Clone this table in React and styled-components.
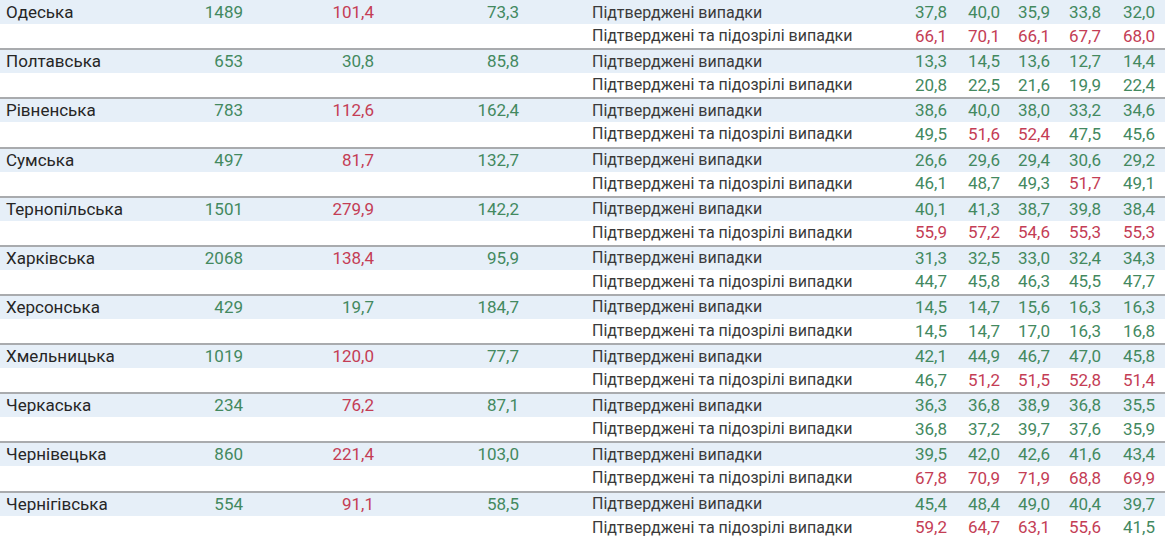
import React from "react";
import styled, { createGlobalStyle } from "styled-components";

const GlobalStyle = createGlobalStyle`
  html, body { margin: 0; padding: 0; background: #ffffff; }
  body { font-family: Roboto, "Liberation Sans", sans-serif; overflow: hidden; }
`;

const GREEN = "#43895f";
const RED = "#c43d55";

const data = [
  ["Одеська", "1489", "101,4", "73,3", ["37,8", "40,0", "35,9", "33,8", "32,0"], ["66,1", "70,1", "66,1", "67,7", "68,0"]],
  ["Полтавська", "653", "30,8", "85,8", ["13,3", "14,5", "13,6", "12,7", "14,4"], ["20,8", "22,5", "21,6", "19,9", "22,4"]],
  ["Рівненська", "783", "112,6", "162,4", ["38,6", "40,0", "38,0", "33,2", "34,6"], ["49,5", "51,6", "52,4", "47,5", "45,6"]],
  ["Сумська", "497", "81,7", "132,7", ["26,6", "29,6", "29,4", "30,6", "29,2"], ["46,1", "48,7", "49,3", "51,7", "49,1"]],
  ["Тернопільська", "1501", "279,9", "142,2", ["40,1", "41,3", "38,7", "39,8", "38,4"], ["55,9", "57,2", "54,6", "55,3", "55,3"]],
  ["Харківська", "2068", "138,4", "95,9", ["31,3", "32,5", "33,0", "32,4", "34,3"], ["44,7", "45,8", "46,3", "45,5", "47,7"]],
  ["Херсонська", "429", "19,7", "184,7", ["14,5", "14,7", "15,6", "16,3", "16,3"], ["14,5", "14,7", "17,0", "16,3", "16,8"]],
  ["Хмельницька", "1019", "120,0", "77,7", ["42,1", "44,9", "46,7", "47,0", "45,8"], ["46,7", "51,2", "51,5", "52,8", "51,4"]],
  ["Черкаська", "234", "76,2", "87,1", ["36,3", "36,8", "38,9", "36,8", "35,5"], ["36,8", "37,2", "39,7", "37,6", "35,9"]],
  ["Чернівецька", "860", "221,4", "103,0", ["39,5", "42,0", "42,6", "41,6", "43,4"], ["67,8", "70,9", "71,9", "68,8", "69,9"]],
  ["Чернігівська", "554", "91,1", "58,5", ["45,4", "48,4", "49,0", "40,4", "39,7"], ["59,2", "64,7", "63,1", "55,6", "41,5"]],
];

const isHigh = (v) => parseFloat(v.replace(",", ".")) > 50;

const Table = styled.div`
  width: 1165px;
  margin-top: -0.9px;
`;

const Block = styled.div`
  border-top: 2px solid #a9abae;
  &:first-child { border-top-color: #e6eff8; }
`;

const Row = styled.div`
  display: grid;
  grid-template-columns: 180px 63px 131px 145px 376px 52px 53px 50px 51px 54px;
  padding-right: 10px;
  height: ${(p) => (p.$band ? "23px" : "24.15px")};
  align-items: center;
  background: ${(p) => (p.$band ? "#e6eff8" : "#ffffff")};
  font-size: 17px;
  line-height: 1;
  white-space: nowrap;
`;

const Name = styled.div`
  padding-left: 6px;
  color: #262626;
`;

const Num = styled.div`
  text-align: right;
  color: ${(p) => (p.$red ? RED : GREEN)};
`;

const Label = styled.div`
  padding-left: 73px;
  font-size: 16px;
  color: #3a3a3a;
`;

const Empty = styled.div``;

export default function App() {
  return (
    <>
      <GlobalStyle />
      <Table>
        {data.map(([name, a, b, c, w1, w2]) => (
          <Block key={name}>
            <Row $band>
              <Name>{name}</Name>
              <Num>{a}</Num>
              <Num $red={isHigh(b)}>{b}</Num>
              <Num>{c}</Num>
              <Label>Підтверджені випадки</Label>
              {w1.map((v, i) => (
                <Num key={i} $red={isHigh(v)}>{v}</Num>
              ))}
            </Row>
            <Row>
              <Empty />
              <Empty />
              <Empty />
              <Empty />
              <Label>Підтверджені та підозрілі випадки</Label>
              {w2.map((v, i) => (
                <Num key={i} $red={isHigh(v)}>{v}</Num>
              ))}
            </Row>
          </Block>
        ))}
      </Table>
    </>
  );
}
